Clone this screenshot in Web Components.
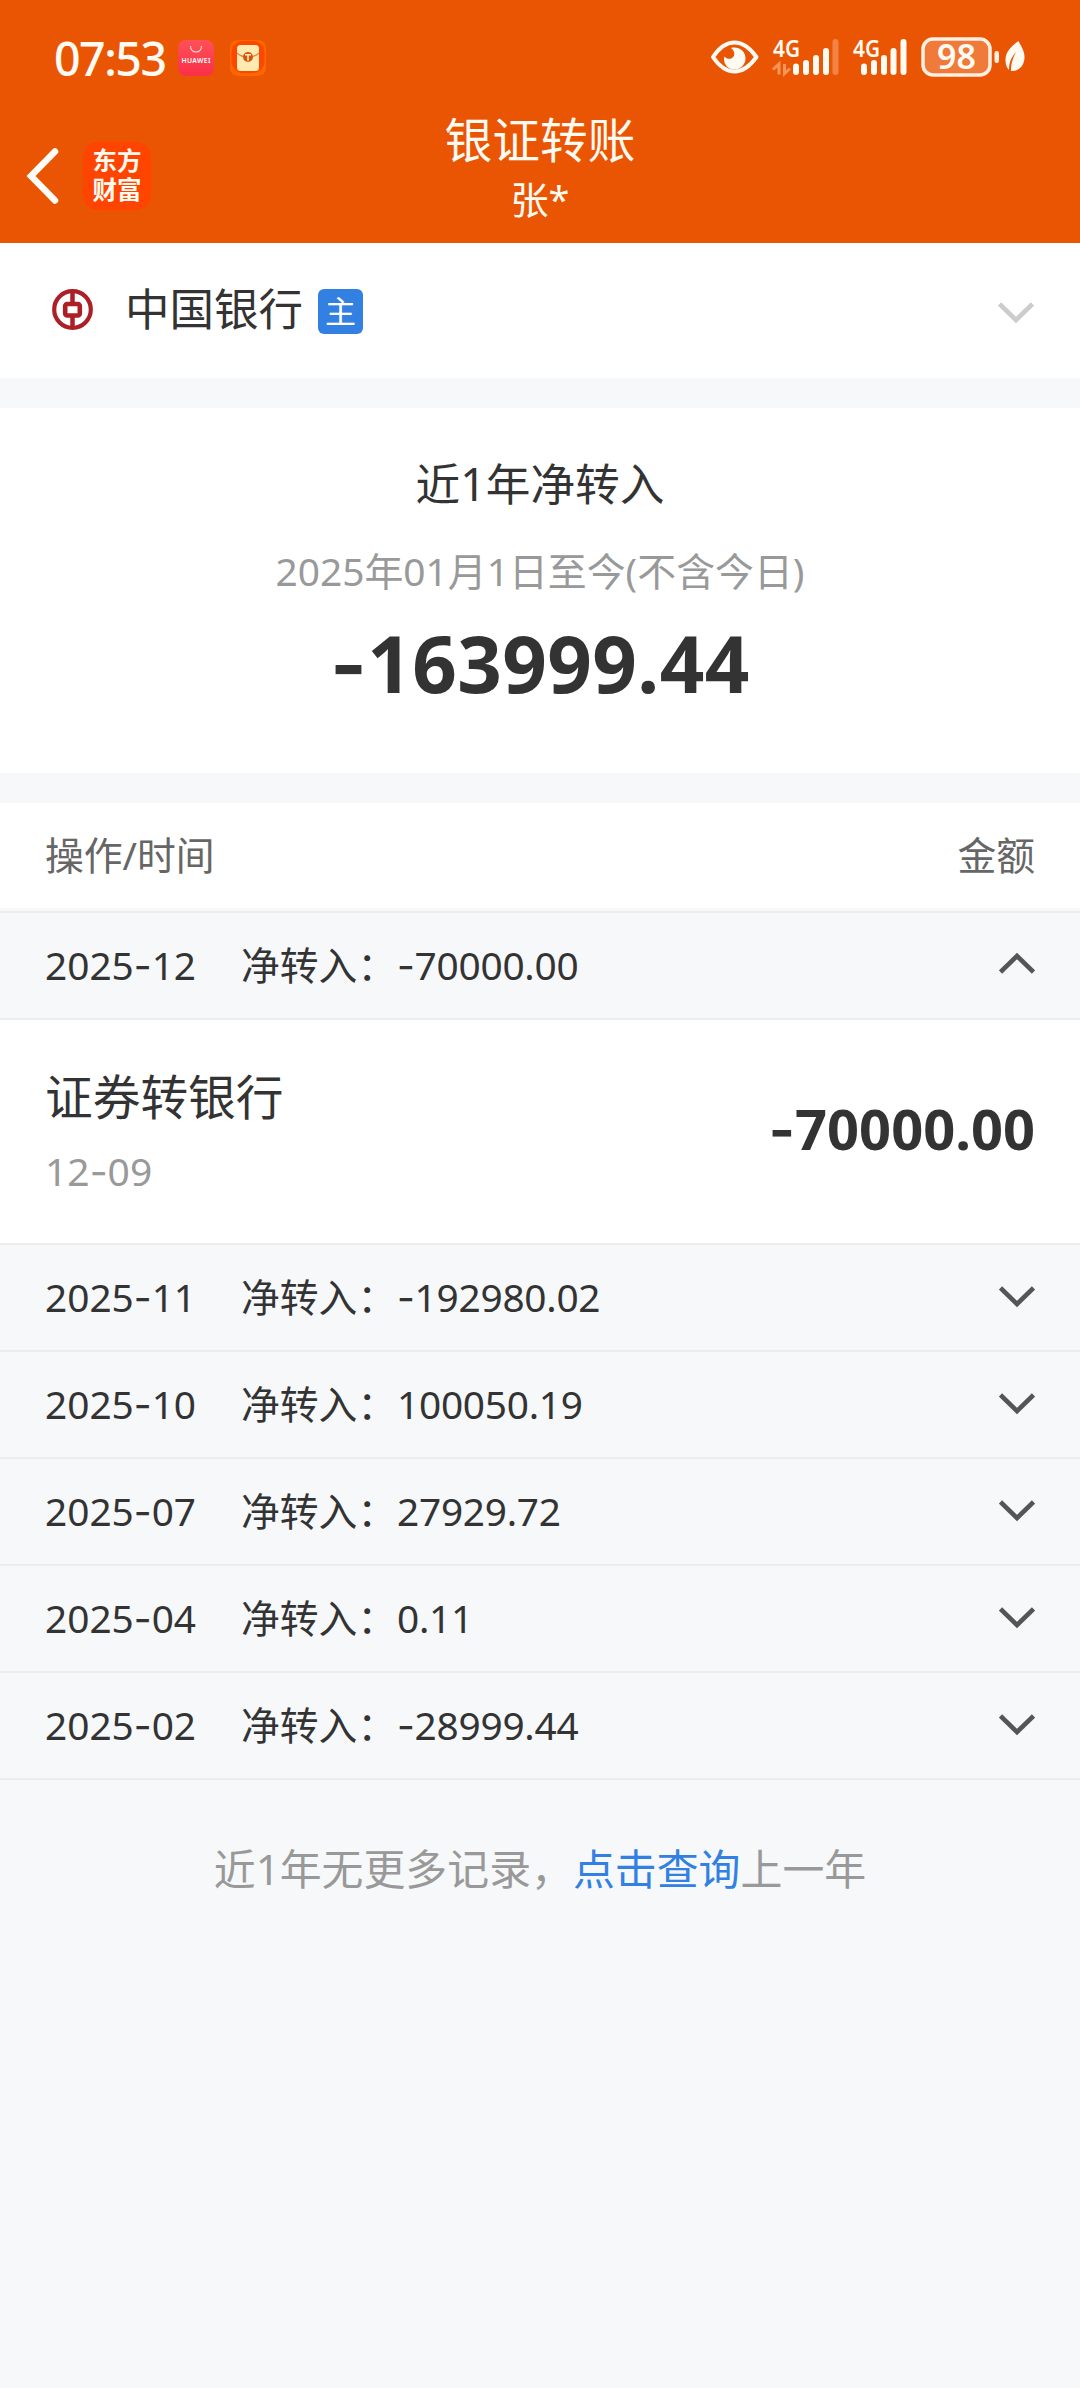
<!DOCTYPE html>
<html lang="zh-CN">
<head>
<meta charset="utf-8">
<title>银证转账</title>
<style>
    html, body {
        margin: 0;
        background: #f6f8fa;
    }

    body {
        width: 1080px;
        height: 2388px;
        overflow: hidden;
        color: #333;
        font: 39px/1 "Noto Sans", "Noto Sans CJK SC", sans-serif;
    }
</style>
</head>
<body>
<transfer-page></transfer-page>

<script>
// the hyphen of the ui font is wide, take it from Inter
const dashes = text => text.replace(/-/g, '<span class="dash">-</span>');
const dashCss = '.dash { font-family: Inter, sans-serif; }';

class BaseComponent extends HTMLElement {
    constructor() {
        super();
        this.attachShadow({ mode: 'open' });
    }

    connectedCallback() {
        const template = document.createElement('template');
        template.innerHTML = `${this.getCss()}${this.getTemplate()}`;
        this.shadowRoot.appendChild(template.content.cloneNode(true));
    }
}

// status bar
class StatusBar extends BaseComponent {
    getTemplate() {
        return `<div class="left">
            <time>07:53</time>
            <svg class="huawei" width="36" height="36" viewBox="0 0 36 36">
                <defs><linearGradient id="r" x2="0" y2="1"><stop stop-color="#ff5058"/><stop offset="1" stop-color="#fa2f48"/></linearGradient></defs>
                <rect width="36" height="36" rx="8" fill="url(#r)"/>
                <path d="M12.5 6c0 3.5 2.300 6 5.500 6s5.500-2.500 5.500-6" fill="none" stroke="#ffe1dc" stroke-width="1.100"/>
                <text x="18" y="23" text-anchor="middle" textLength="29" font-size="6.800" font-weight="600" fill="#fff">HUAWEI</text>
            </svg>
            <svg width="36" height="36" viewBox="0 0 36 36">
                <rect width="36" height="36" rx="8" fill="#ff6500"/>
                <rect x="1.500" y="1" width="33" height="32" rx="12" fill="#fb4700"/>
                <rect x="7" y="5" width="22" height="26" rx="3.500" fill="#ffeab2"/>
                <path d="M7 13c3 3 7 4 11 4s8-1 11-4" fill="none" stroke="#e5833a" stroke-width="1.200"/>
                <circle cx="18" cy="17" r="5" fill="#d4550e"/>
                <path d="M15 14.800h6M18 14.800v6" stroke="#ffeab2" stroke-width="1.600"/>
            </svg>
        </div>
        <svg class="right" width="320" height="72" viewBox="710 22 320 72">
            <path d="M713 57c6-9 13-14.500 21.500-14.500S750 48 756.500 57c-6.500 9-13.500 14.500-22 14.500S719 66 713 57z" fill="none" stroke="#fffaf2" stroke-width="4" stroke-linejoin="round"/>
            <path d="M731 48c7-2 14.500 2.500 14.500 10.500 0 6-5 11-11 11s-10.500-5-10.500-10c0-1 0-2 .500-3 2 2.500 5 3 7.500 1.500 3.500-2 3-7-1-10z" fill="#fffaf2"/>
            <text x="773" y="56.500" font-size="24" textLength="27" lengthAdjust="spacingAndGlyphs" font-weight="600" fill="#fffaf2">4G</text>
            <path d="M773 69.500l6-5.500v10.500M784.500 64V73.500l5.500-5" fill="none" stroke="#f5955a" stroke-width="3"/>
            <g stroke-width="6" stroke-linecap="round" stroke="#fffaf2">
                <path d="M796 66.500v5.500M806 63v9M816 58v14M826 51v21"/>
                <path d="M835.500 42v30" stroke="#f28344"/>
                <path d="M864 66.500v5.500M874 63v9M884 58v14M893.500 51v21M903.500 42v30"/>
            </g>
            <text x="853" y="56.500" font-size="24" textLength="27" lengthAdjust="spacingAndGlyphs" font-weight="600" fill="#fffaf2">4G</text>
            <rect x="923" y="39" width="67" height="36" rx="10" fill="#f07a3a" stroke="#fff0e2" stroke-width="3.500"/>
            <text x="937" y="69.300" font-size="34" textLength="39" font-weight="600" fill="#fffaf2">98</text>
            <rect x="994.500" y="51" width="4.500" height="12" rx="2.200" fill="#fff0e2"/>
            <path d="M1018.500 41c-7 5-13 11-13 19 0 5 1.500 8 3.500 10 0-9 3-13 7-18-3 6-5 11-5 19 9 0 13.500-6 13.500-14 0-6-2.500-9-6-16z" fill="#fffaf2"/>
        </svg>`;
    }

    getCss = () => `<style>
            :host {
                height: 116px;
                padding: 0 50px 0 54px;
                display: flex;
                justify-content: space-between;
                align-items: center;
            }

            .left {
                display: flex;
                align-items: center;
            }

            time {
                width: 108px;
                font-size: 46.5px;
                font-weight: 500;
                letter-spacing: -1.500px;
                margin-right: 16px;
                white-space: nowrap;
            }

            .huawei {
                margin-right: 16px;
            }
        </style>`;
}

// orange header with the title
class PageHeader extends BaseComponent {
    getTemplate() {
        return `<status-bar></status-bar>
        <nav>
            <div class="side">
                <svg width="36" height="60" viewBox="0 0 36 60"><path d="M31 5.500L7 30l24 24.500" fill="none" stroke="#fffdf8" stroke-width="6.500" stroke-linecap="round"/></svg>
                <div class="logo">东方<br>财富</div>
            </div>
            <div class="title">
                <slot name="title"></slot>
                <slot name="user"></slot>
            </div>
        </nav>`;
    }

    getCss = () => `<style>
            :host {
                display: block;
                height: 243px;
                background: #ea5504;
                color: #fffaf2;
            }

            nav {
                height: 127px;
                display: grid;
                grid-template-columns: 300px 1fr 300px;
            }

            .side {
                display: flex;
                align-items: center;
                height: 119px;
                padding-left: 24px;
            }

            .logo {
                margin-left: 23px;
                width: 68px;
                height: 68px;
                box-sizing: border-box;
                padding-top: 5px;
                border-radius: 15px;
                background: #ff4400;
                font: 700 24.5px/29px "Liberation Sans", "Noto Sans CJK SC", sans-serif;
                text-align: center;
            }

            .title {
                display: flex;
                flex-direction: column;
                align-items: center;
            }

            ::slotted([slot=title]) {
                font-size: 47.7px;
                line-height: 48px;
            }

            ::slotted([slot=user]) {
                font-size: 38px;
                line-height: 40px;
                margin-top: 15px;
            }
        </style>`;
}

// bank selector
class BankSelect extends BaseComponent {
    getTemplate() {
        return `<svg width="41" height="41" viewBox="0 0 41 41" fill="none" stroke="#ad1f26">
            <circle cx="20.500" cy="20.500" r="18.300" stroke-width="4.200"/>
            <path d="M20.500 2v12M20.500 27v12" stroke-width="4.500"/>
            <rect x="13.200" y="15" width="14.600" height="11.500" rx="2" stroke-width="4.600"/>
        </svg>
        <span class="name"><slot></slot></span>
        <span class="badge">主</span>
        <chevron-icon color="#ccc"></chevron-icon>`;
    }

    getCss = () => `<style>
            :host {
                display: flex;
                align-items: center;
                height: 135px;
                padding: 0 46px 0 52px;
                background: #fff;
            }

            svg {
                margin-bottom: 2px;
            }

            .name {
                margin: 0 15px 3px 32px;
                font-size: 44.5px;
            }

            .badge {
                width: 45px;
                height: 45px;
                border-radius: 6px;
                background: #3380e3;
                color: #fff;
                font-size: 31px;
                line-height: 44px;
                text-align: center;
                margin-top: 2px;
                margin-right: auto;
            }

            chevron-icon {
                margin-top: 3px;
            }
        </style>`;
}

class ChevronIcon extends BaseComponent {
    getTemplate() {
        const color = this.getAttribute('color') || '#555';
        const d = this.hasAttribute('up') ? 'M1.500 20L18 4l16.500 16' : 'M1.500 4L18 20 34.500 4';
        return `<svg width="36" height="24" viewBox="0 0 36 24"><path d="${d}" fill="none" stroke="${color}" stroke-width="4.600"/></svg>`;
    }

    getCss = () => `<style>
            :host {
                display: block;
                line-height: 0;
            }
        </style>`;
}

// total of the year
class NetSummary extends BaseComponent {
    getTemplate() {
        return `<h1>近1年净转入</h1>
        <p>2025年01月1日至今(不含今日)</p>
        <strong>${dashes(this.getAttribute('amount'))}</strong>`;
    }

    getCss = () => `<style>
            ${dashCss}
            :host {
                display: flex;
                flex-direction: column;
                align-items: center;
                box-sizing: border-box;
                height: 365px;
                margin: 30px 0;
                padding-top: 51px;
                background: #fff;
            }

            h1 {
                margin: 0;
                font-size: 44.7px;
                font-weight: 400;
                line-height: 50px;
            }

            p {
                margin: 42px 0 0;
                color: #999;
                line-height: 40px;
                font-size: 38.9px;
            }

            strong {
                margin-top: 27px;
                font-size: 78px;
                line-height: 90px;
                letter-spacing: .4px;
            }
        </style>`;
}

// one month, its records go into the slot
class MonthRow extends BaseComponent {
    getTemplate() {
        return `<div class="row">
            <span class="month">${dashes(this.getAttribute('month'))}</span>
            <span class="label">净转入：</span>
            <span class="sum">${dashes(this.getAttribute('sum'))}</span>
            <chevron-icon ${this.hasAttribute('open') ? 'up' : ''}></chevron-icon>
        </div>
        <slot></slot>`;
    }

    getCss = () => `<style>
            ${dashCss}
            :host {
                display: block;
            }

            .row {
                display: flex;
                align-items: center;
                height: 105px;
                padding: 0 45px;
                border-bottom: 2px solid #ebedee;
                font-size: 38.8px;
            }

            .month {
                width: 196px;
            }

            .label {
                width: 156px;
                white-space: nowrap;
            }

            .sum {
                letter-spacing: -.25px;
            }

            chevron-icon {
                margin: 0 0 4px auto;
            }
        </style>`;
}

class TransferRecord extends BaseComponent {
    getTemplate() {
        return `<div class="info">
            <div class="name"><slot></slot></div>
            <div class="date">${dashes(this.getAttribute('date'))}</div>
        </div>
        <strong>${dashes(this.getAttribute('amount'))}</strong>`;
    }

    getCss = () => `<style>
            ${dashCss}
            :host {
                display: flex;
                justify-content: space-between;
                align-items: center;
                height: 223px;
                padding: 0 45px;
                background: #fff;
                border-bottom: 2px solid #ebedee;
            }

            .name {
                font-size: 47.7px;
                line-height: 50px;
            }

            .date {
                margin-top: 29px;
                color: #999;
                line-height: 40px;
            }

            strong {
                font-size: 56px;
                margin-bottom: 5px;
            }
        </style>`;
}

class TransferPage extends BaseComponent {
    getTemplate() {
        return `<page-header>
            <span slot="title">银证转账</span>
            <span slot="user">张*</span>
        </page-header>
        <bank-select>中国银行</bank-select>
        <net-summary amount="-163999.44"></net-summary>
        <div class="head"><span>操作/时间</span><span>金额</span></div>
        <month-row month="2025-12" sum="-70000.00" open>
            <transfer-record date="12-09" amount="-70000.00">证券转银行</transfer-record>
        </month-row>
        <month-row month="2025-11" sum="-192980.02"></month-row>
        <month-row month="2025-10" sum="100050.19"></month-row>
        <month-row month="2025-07" sum="27929.72"></month-row>
        <month-row month="2025-04" sum="0.11"></month-row>
        <month-row month="2025-02" sum="-28999.44"></month-row>
        <footer>近1年无更多记录，<a>点击查询</a>上一年</footer>`;
    }

    getCss = () => `<style>
            :host {
                display: block;
            }

            .head {
                display: flex;
                justify-content: space-between;
                align-items: center;
                height: 105px;
                padding: 0 45px;
                margin-bottom: 3px;
                background: #fff;
                color: #666;
                font-size: 38.8px;
            }

            .head + month-row {
                border-top: 2px solid #ebedee;
            }

            footer {
                margin-top: 64px;
                color: #999;
                font-size: 41.9px;
                line-height: 50px;
                text-align: center;
            }

            a {
                color: #3380e3;
            }
        </style>`;
}

customElements.define('status-bar', StatusBar);
customElements.define('page-header', PageHeader);
customElements.define('chevron-icon', ChevronIcon);
customElements.define('bank-select', BankSelect);
customElements.define('net-summary', NetSummary);
customElements.define('month-row', MonthRow);
customElements.define('transfer-record', TransferRecord);
customElements.define('transfer-page', TransferPage);
</script>
</body>
</html>
